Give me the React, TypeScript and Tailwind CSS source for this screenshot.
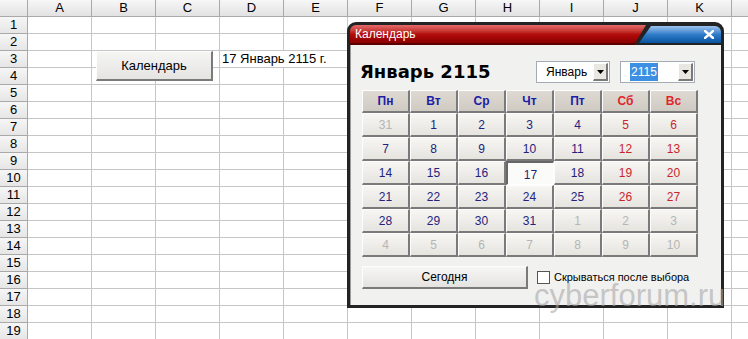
import React from "react";

const COLS = ["A", "B", "C", "D", "E", "F", "G", "H", "I", "J", "K", ""];
const ROWS = Array.from({ length: 19 }, (_, i) => i + 1);

const WEEKDAYS = ["Пн", "Вт", "Ср", "Чт", "Пт", "Сб", "Вс"];

// [day, belongs to current month]
const WEEKS: [number, boolean][][] = [
  [[31, false], [1, true], [2, true], [3, true], [4, true], [5, true], [6, true]],
  [[7, true], [8, true], [9, true], [10, true], [11, true], [12, true], [13, true]],
  [[14, true], [15, true], [16, true], [17, true], [18, true], [19, true], [20, true]],
  [[21, true], [22, true], [23, true], [24, true], [25, true], [26, true], [27, true]],
  [[28, true], [29, true], [30, true], [31, true], [1, false], [2, false], [3, false]],
  [[4, false], [5, false], [6, false], [7, false], [8, false], [9, false], [10, false]],
];

const raised =
  "border-t border-l border-t-[#fdfdfd] border-l-[#fdfdfd] border-r-2 border-b-2 border-r-[#7a7a7a] border-b-[#7a7a7a]";

const Sheet = () => (
  <div className="grid grid-cols-[28px_repeat(12,64px)] auto-rows-[17px] text-[13px] leading-[16px] text-black">
    {/* Column headers */}
    <div className="border-r border-b border-[#a9a9a9] bg-linear-to-b from-[#f7f7f7] to-[#e2e2e2]" />
    {COLS.map((c, i) => (
      <div
        key={i}
        className="border-r border-b border-[#a9a9a9] bg-linear-to-b from-[#f7f7f7] to-[#e2e2e2] text-center"
      >
        {c}
      </div>
    ))}

    {/* Rows */}
    {ROWS.map((r) => (
      <React.Fragment key={r}>
        <div className="border-r border-b border-[#a9a9a9] bg-linear-to-b from-[#f6f6f6] to-[#e6e6e6] text-center">
          {r}
        </div>
        {COLS.map((c, i) => {
          const isDate = r === 3 && c === "D";
          return (
            <div
              key={i}
              className={
                isDate
                  ? "border-b border-[#c6c6c6] whitespace-nowrap pl-[2px]"
                  : "border-r border-b border-[#c6c6c6]"
              }
            >
              {isDate ? "17 Январь 2115 г." : null}
            </div>
          );
        })}
      </React.Fragment>
    ))}
  </div>
);

const Select = ({ value, width, selected }: { value: string; width: string; selected?: boolean }) => (
  <div className={`flex h-[22px] items-center border border-[#a5acb5] bg-white ${width}`}>
    <div className="flex flex-1 items-center pl-[9px]">
      <span className={selected ? "bg-[#3d8fe3] px-[1px] text-white" : "text-black"}>{value}</span>
    </div>
    <div className={`mr-[1px] flex h-[18px] w-[15px] items-center justify-center bg-[#e9e7e2] ${raised} border-r border-b`}>
      <svg width="7" height="4" viewBox="0 0 7 4">
        <path d="M0 0h7L3.5 4z" fill="#000" />
      </svg>
    </div>
  </div>
);

const DayCell = ({ day, current, weekend, today }: { day: number; current: boolean; weekend: boolean; today?: boolean }) => {
  const color = !current ? "text-[#b5b5b5]" : weekend ? "text-[#c9252d]" : "text-[#23237e]";
  if (today) {
    return (
      <div
        className={`flex items-center justify-center pt-[3px] border-t-2 border-l-2 border-t-[#666] border-l-[#666] border-r border-b border-r-white border-b-white bg-[#fbfbf9] ${color}`}
      >
        {day}
      </div>
    );
  }
  return (
    <div className={`flex items-center justify-center bg-linear-to-b from-[#f7f6f3] to-[#e6e4df] ${raised} ${color}`}>
      {day}
    </div>
  );
};

const CalendarWindow = () => (
  <div className="absolute left-[347px] top-[22px] flex h-[286px] w-[377px] flex-col rounded-t-[9px] bg-[#232323] p-[3px] font-['Liberation_Sans',Arial,sans-serif]">
    {/* Title bar */}
    <div className="flex h-[20px] shrink-0">
      <div className="flex-1 rounded-tl-[6px] border-b-2 border-[#5a0000] bg-linear-to-b from-[#e56a6a] via-[#b50c0c] to-[#8a0000] pl-[5px] text-[12px] leading-[19px] text-white [clip-path:polygon(0_0,100%_0,calc(100%_-_12px)_100%,0_100%)]">
        Календарь
      </div>
      <div className="-ml-[7px] mt-[1px] mb-[2px] flex w-[82px] items-center justify-end rounded-tr-[6px] bg-linear-to-b from-[#9cc4ee] via-[#2f7cc9] to-[#05549f] pr-[7px] [clip-path:polygon(12px_0,100%_0,100%_100%,0_100%)]">
        <svg width="10" height="9" viewBox="0 0 10 9">
          <path d="M1 1l8 7M9 1L1 8" stroke="#fff" strokeWidth="2.4" strokeLinecap="square" />
        </svg>
      </div>
    </div>

    {/* Body */}
    <div className="flex-1 border-l border-[#9a9a9a] bg-[#f1f1f0] pl-[11px] pt-[16px]">
      <div className="flex w-[336px] items-center justify-between text-[12px]">
        <div className="-ml-[2px] font-['DejaVu_Sans',Verdana,sans-serif] text-[18px] font-bold leading-[22px] text-black">
          Январь 2115
        </div>
        <div className="mr-[3px] flex gap-[10px]">
          <Select value="Январь" width="w-[74px]" />
          <Select value="2115" width="w-[75px]" selected />
        </div>
      </div>

      {/* Calendar grid */}
      <div className="mt-[7px] grid w-[336px] grid-cols-7 grid-rows-[23px_repeat(6,24px)] text-[12px]">
        {WEEKDAYS.map((d, i) => (
          <div
            key={d}
            className={`flex items-center justify-center bg-linear-to-b from-[#dedad3] to-[#cfcbc3] font-bold ${raised} ${
              i >= 5 ? "text-[#e0262b]" : "text-[#1d1da6]"
            }`}
          >
            {d}
          </div>
        ))}
        {WEEKS.map((week, wi) =>
          week.map(([day, current], di) => (
            <DayCell
              key={`${wi}-${di}`}
              day={day}
              current={current}
              weekend={di >= 5}
              today={current && day === 17}
            />
          ))
        )}
      </div>

      {/* Footer */}
      <div className="mt-[9px] flex items-center text-black">
        <div className={`flex h-[23px] w-[166px] items-center justify-center bg-linear-to-b from-[#f6f6f5] to-[#e4e3e0] text-[12px] ${raised}`}>
          Сегодня
        </div>
        <div className="ml-[9px] h-[13px] w-[13px] border border-[#555] bg-white" />
        <span className="ml-[4px] text-[11px]">Скрываться после выбора</span>
      </div>
    </div>
  </div>
);

export default function App() {
  return (
    <div className="relative h-[339px] w-[748px] overflow-hidden bg-white font-['Liberation_Sans',Arial,sans-serif]">
      <Sheet />

      {/* Form button on the sheet */}
      <div
        className={`absolute left-[96px] top-[51px] flex h-[30px] w-[117px] items-center justify-center bg-linear-to-b from-[#f5f5f4] to-[#e5e4e1] text-[13px] text-black ${raised}`}
      >
        Календарь
      </div>

      <CalendarWindow />

      {/* Watermark */}
      <div className="pointer-events-none absolute left-[534px] top-[278px] text-[31px] leading-[36px] text-[#a8a8a8]/60">
        cyberforum.ru
      </div>
    </div>
  );
}
